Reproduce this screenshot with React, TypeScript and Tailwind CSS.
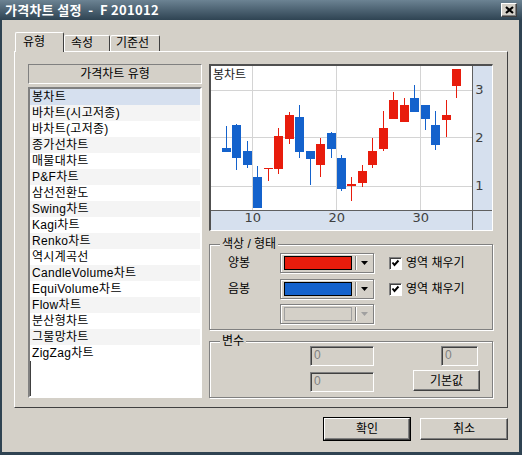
import React from 'react';

type Candle = [number, number, number, number, number, 'r' | 'b'];

// chart coords are in 3x units of the dialog (origin 205,55)
const candles: Candle[] = [
  [64, 278, 290, 213, 290, 'b'],
  [94, 210, 308, 207, 345, 'b'],
  [127, 288, 329, 258, 338, 'b'],
  [157, 366, 458, 333, 458, 'b'],
  [190, 339, 342, 339, 378, 'r'],
  [220, 243, 342, 218, 356, 'r'],
  [253, 180, 251, 171, 266, 'r'],
  [283, 186, 290, 150, 308, 'b'],
  [316, 288, 311, 288, 390, 'b'],
  [346, 267, 329, 249, 365, 'r'],
  [379, 234, 281, 231, 308, 'b'],
  [409, 309, 401, 299, 407, 'b'],
  [439, 387, 393, 366, 437, 'r'],
  [472, 348, 383, 330, 395, 'r'],
  [502, 288, 329, 249, 338, 'r'],
  [535, 219, 281, 168, 288, 'r'],
  [565, 135, 191, 111, 191, 'r'],
  [598, 150, 200, 129, 200, 'r'],
  [628, 129, 170, 90, 170, 'b'],
  [661, 150, 191, 150, 224, 'b'],
  [691, 210, 269, 168, 284, 'b'],
  [724, 180, 194, 135, 245, 'r'],
  [754, 42, 92, 42, 129, 'r'],
];

const RED = '#e81c0c';
const BLUE = '#1462cc';

const chartTypes = [
  '봉차트',
  '바차트(시고저종)',
  '바차트(고저종)',
  '종가선차트',
  '매물대차트',
  'P&F차트',
  '삼선전환도',
  'Swing차트',
  'Kagi차트',
  'Renko차트',
  '역시계곡선',
  'CandleVolume차트',
  'EquiVolume차트',
  'Flow차트',
  '분산형차트',
  '그물망차트',
  'ZigZag차트',
];

const raised =
  'border border-t-white border-l-white border-r-[#404040] border-b-[#404040] shadow-[inset_-1px_-1px_0_#808080]';
const sunken =
  'border border-t-[#808080] border-l-[#808080] border-r-white border-b-white shadow-[inset_1px_1px_0_#404040]';

function CandleChart() {
  const snap = (v: number) => Math.round(v / 3) * 3;
  return (
    <svg width={281} height={164} viewBox="18 33 843 492" shapeRendering="crispEdges" className="block">
      <rect x={18} y={33} width={843} height={492} fill="#fff" />
      <rect x={804} y={33} width={57} height={492} fill="#d6e0ee" />
      <rect x={18} y={465} width={843} height={60} fill="#d6e0ee" />
      {/* grid */}
      {[141, 393, 645].map((x) => (
        <rect key={x} x={x} y={33} width={3} height={432} fill="#d4d4d4" />
      ))}
      {[105, 246, 393].map((y) => (
        <rect key={y} x={18} y={y} width={786} height={3} fill="#d4d4d4" />
      ))}
      {/* axes */}
      <rect x={801} y={33} width={3} height={492} fill="#606060" />
      <rect x={18} y={465} width={843} height={3} fill="#606060" />
      {/* candles */}
      {candles.map(([cx, bt, bb, wt, wb, c], i) => {
        const x = snap(cx);
        const fill = c === 'r' ? RED : BLUE;
        return (
          <g key={i} fill={fill}>
            <rect x={x} y={snap(wt)} width={3} height={Math.max(3, snap(wb) - snap(wt))} />
            <rect x={x - 12} y={snap(bt)} width={27} height={Math.max(3, snap(bb) - snap(bt))} />
          </g>
        );
      })}
      <text x={24} y={71} fontSize={36} fill="#222" fontFamily="'Noto Sans CJK KR', sans-serif">
        봉차트
      </text>
      {[
        ['3', 116],
        ['2', 260],
        ['1', 405],
      ].map(([t, y]) => (
        <text key={t} x={811} y={y} fontSize={39} fill="#404040" fontFamily="'DejaVu Sans', sans-serif">
          {t}
        </text>
      ))}
      {[
        ['10', 143],
        ['20', 395],
        ['30', 647],
      ].map(([t, x]) => (
        <text key={t} x={x} y={501} fontSize={39} textAnchor="middle" fill="#404040" fontFamily="'DejaVu Sans', sans-serif">
          {t}
        </text>
      ))}
    </svg>
  );
}

function ColorCombo({ color, disabled }: { color?: string; disabled?: boolean }) {
  return (
    <div className="w-[94px] h-[20px] flex items-center border border-[#808080] shadow-[inset_1px_1px_0_#fff,1px_1px_0_#fff] pl-[3px]">
      <div
        className={`w-[68px] h-[14px] border ${disabled ? 'border-[#a0a0a0]' : 'border-black'}`}
        style={{ backgroundColor: color ?? '#d4d0c8' }}
      />
      <div className="ml-[3px] h-[14px] w-[2px] border-l border-l-[#808080] border-r border-r-white" />
      <svg width="7" height="4" viewBox="0 0 7 4" className="ml-[4px]">
        <polygon points="0,0 7,0 3.5,4" fill={disabled ? '#a0a0a0' : '#000'} />
      </svg>
    </div>
  );
}

function CheckBox() {
  return (
    <div className={`w-[13px] h-[13px] bg-white flex items-center justify-center ${sunken}`}>
      <svg width="9" height="9" viewBox="0 0 9 9">
        <polyline points="1.5,3.5 3.5,6 7.5,1.5" fill="none" stroke="#000" strokeWidth="2" />
      </svg>
    </div>
  );
}

function NumField({ w }: { w: string }) {
  return (
    <div className={`${w} h-[20px] bg-[#d4d0c8] ${sunken} pl-[3px] text-[12px] leading-[17px] text-[#808080]`}>0</div>
  );
}

export default function App() {
  return (
    <div className="w-[522px] h-[455px] flex flex-col bg-[#2f4352] font-['Liberation_Sans','Noto_Sans_CJK_KR',sans-serif] text-[12px] text-black select-none">
      {/* Title bar */}
      <div className="h-[20px] flex items-center justify-between bg-gradient-to-b from-[#6c8393] to-[#2f4453] pl-[5px] pr-[5px]">
        <span className="text-white font-bold text-[13px] leading-[14px] whitespace-pre tracking-[0.3px] font-['Noto_Sans_CJK_KR',sans-serif]">
          가격차트 설정  -  F 201012
        </span>
        <div className={`w-[16px] h-[14px] bg-[#d4d0c8] flex items-center justify-center ${raised}`}>
          <svg width="9" height="8" viewBox="0 0 9 8">
            <path d="M1 1 L8 7 M8 1 L1 7" stroke="#000" strokeWidth="2.2" />
          </svg>
        </div>
      </div>

      {/* Body */}
      <div className="flex-1 ml-[2px] mr-[3px] mb-[3px] bg-[#d4d0c8] pl-[12px] pt-[12px] flex flex-col">
        {/* Tabs */}
        <div className="ml-px h-[20px] -mb-px flex items-end relative z-10">
          <div className="w-[49px] h-[20px] bg-[#d4d0c8] border-t border-l border-r border-t-white border-l-white border-r-[#404040] rounded-t-[2px] pl-[7px] pt-[2px] leading-[14px]">
            유형
          </div>
          <div className="w-[46px] h-[16px] mb-px border-t border-l border-r border-t-white border-l-white border-r-[#404040] rounded-t-[2px] pl-[6px] leading-[14px]">
            속성
          </div>
          <div className="w-[50px] h-[16px] mb-px border-t border-r border-t-white border-r-[#404040] rounded-t-[2px] pl-[6px] leading-[14px] shadow-[inset_1px_0_0_#fff]">
            기준선
          </div>
        </div>

        {/* Panel */}
        <div className="w-[494px] h-[357px] border border-t-white border-l-white border-r-[#404040] border-b-[#404040] flex gap-[7px] pt-[12px] pl-[13px]">
          {/* Left list */}
          <div className="w-[174px] flex flex-col gap-[3px]">
            <div className="h-[20px] border border-t-[#808080] border-l-[#808080] border-r-white border-b-white flex items-center justify-center leading-[14px]">
              가격차트 유형
            </div>
            <div className={`h-[311px] bg-white ${sunken} border-[2px] border-t-[#606060] border-l-[#606060] border-r-white border-b-white`}>
              {chartTypes.map((t, i) => (
                <div
                  key={t}
                  className={`h-[16px] leading-[16px] pl-[2px] whitespace-nowrap tracking-[0.3px] ${
                    i === 0 ? 'bg-[#d6e0ef]' : i % 2 === 1 ? 'bg-[#f4f4f4]' : 'bg-white'
                  }`}
                >
                  {t}
                </div>
              ))}
            </div>
          </div>

          {/* Right side */}
          <div className="w-[284px] flex flex-col">
            <div className="w-[284px] h-[167px] border-t-2 border-l-2 border-r border-b border-t-[#505050] border-l-[#505050] border-r-white border-b-white">
              <CandleChart />
            </div>

            {/* 색상 / 형태 */}
            <div className="relative mt-[13px] h-[86px] border border-[#808080] shadow-[inset_1px_1px_0_#fff,1px_1px_0_#fff] pt-[8px] flex flex-col">
              <span className="absolute left-[10px] -top-[8px] bg-[#d4d0c8] px-[2px] leading-[14px]">색상 / 형태</span>
              <div className="flex items-center h-[20px]">
                <span className="w-[70px] pl-[18px] leading-[14px]">양봉</span>
                <ColorCombo color={RED} />
                <div className="ml-[15px]">
                  <CheckBox />
                </div>
                <span className="ml-[4px] leading-[14px]">영역 채우기</span>
              </div>
              <div className="flex items-center h-[20px] mt-[6px]">
                <span className="w-[70px] pl-[18px] leading-[14px]">음봉</span>
                <ColorCombo color={BLUE} />
                <div className="ml-[15px]">
                  <CheckBox />
                </div>
                <span className="ml-[4px] leading-[14px]">영역 채우기</span>
              </div>
              <div className="flex items-center h-[20px] mt-[5px]">
                <span className="w-[70px]" />
                <ColorCombo disabled />
              </div>
            </div>

            {/* 변수 */}
            <div className="relative mt-[11px] h-[57px] border border-[#808080] shadow-[inset_1px_1px_0_#fff,1px_1px_0_#fff] pt-[4px] flex flex-col">
              <span className="absolute left-[10px] -top-[8px] bg-[#d4d0c8] px-[2px] leading-[14px]">변수</span>
              <div className="flex h-[20px] pl-[100px]">
                <NumField w="w-[64px]" />
                <div className="ml-[67px]">
                  <NumField w="w-[37px]" />
                </div>
              </div>
              <div className="flex items-start mt-[4px] pl-[100px]">
                <div className="mt-[2px]">
                  <NumField w="w-[64px]" />
                </div>
                <div className={`ml-[39px] w-[67px] h-[21px] flex items-center justify-center leading-[14px] ${raised}`}>
                  기본값
                </div>
              </div>
            </div>
          </div>
        </div>

        {/* Bottom buttons */}
        <div className="flex justify-end items-center gap-[9px] mt-[9px] pr-[11px]">
          <div className="w-[88px] h-[24px] border border-black">
            <div className={`w-full h-full flex items-center justify-center leading-[14px] ${raised}`}>확인</div>
          </div>
          <div className={`w-[88px] h-[22px] flex items-center justify-center leading-[14px] ${raised}`}>취소</div>
        </div>
      </div>
    </div>
  );
}
